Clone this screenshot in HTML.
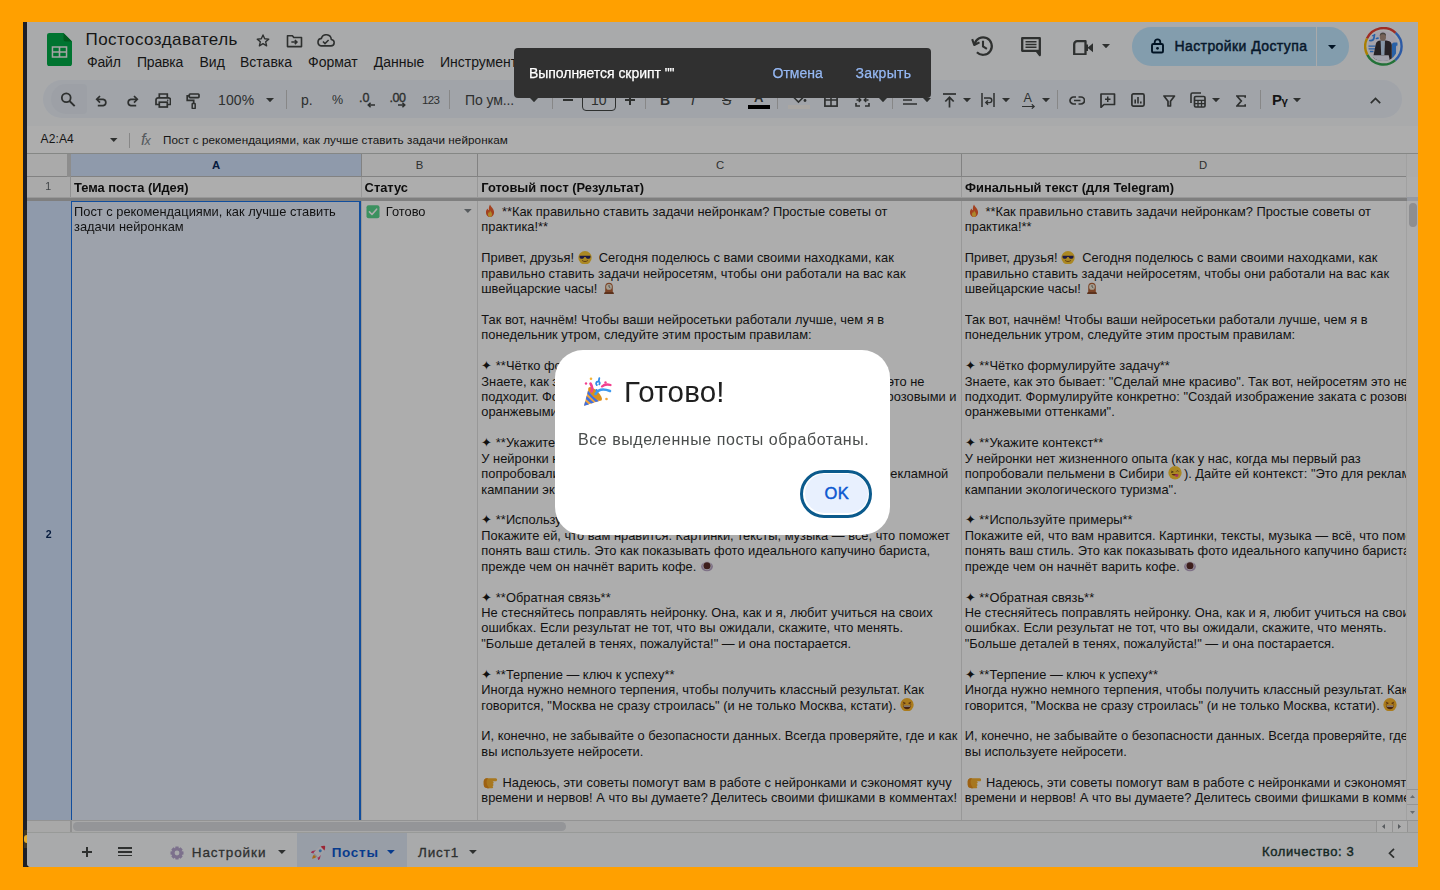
<!DOCTYPE html>
<html lang="ru"><head><meta charset="utf-8"><title>Постосоздаватель</title>
<style>
html,body{margin:0;padding:0}
body{width:1440px;height:890px;overflow:hidden;background:#ffa000;font-family:"Liberation Sans",Arial,sans-serif;position:relative}
#win{position:absolute;left:23px;top:22px;width:1395px;height:845px;overflow:hidden;background:#1d1f27}
#g{position:absolute;left:-23px;top:-22px;width:1440px;height:890px;filter:blur(0.4px)}
.a{position:absolute;display:block}
.t{position:absolute;white-space:nowrap}
.cell{position:absolute;white-space:nowrap;font-size:12.87px;line-height:15.420px;color:#1a1a1a;overflow:hidden}
.e{display:inline-block;vertical-align:-2.5px;width:13px;height:13px}
</style></head><body>
<div id="win"><div id="g">
<div class="a" style="left:26.8px;top:22px;width:1391.2px;height:845px;background:#f9fbfd;border-bottom-left-radius:4px"></div>
<div class="a" style="left:26px;top:126px;width:1392px;height:27px;background:#ffffff;"></div>
<div class="a" style="left:43px;top:80px;width:1359px;height:38px;background:#edf2fa;border-radius:19px"></div>
<div class="a" style="left:51px;top:84px;width:36px;height:30px;background:#e7ecf5;border-radius:15px 4px 4px 15px"></div>
<svg class="a" style="left:47px;top:32.6px;" width="25" height="33.3" viewBox="0 0 25 33.3"><path d="M2.500 0H16.500l8.500 8.500v22.300a2.500 2.500 0 0 1-2.500 2.500h-20A2.500 2.500 0 0 1 0 30.800v-28.300A2.500 2.500 0 0 1 2.500 0z" fill="#00ac47"/><path d="M16.500 0l8.500 8.500h-6A2.500 2.500 0 0 1 16.500 6z" fill="#00832d"/><path d="M4.700 13.200h15.600v11.600H4.700zM6.200 14.700v3.500h5.500v-3.500zm7.100 0v3.500h5.500v-3.500zM6.200 19.800v3.500h5.500v-3.500zm7.100 0v3.500h5.500v-3.500z" fill="#f4f4f4" fill-rule="evenodd"/></svg>
<div class="t" style="left:85.50px;top:28.11px;font-size:17px;line-height:24px;color:#1f1f1f;letter-spacing:0.45px;">Постосоздаватель</div>
<svg class="a" style="left:255px;top:33px;" width="16" height="15" viewBox="0 0 24 24"><path d="M12 3.200l2.700 6 6.500.600-4.900 4.300 1.500 6.400L12 17.100l-5.800 3.400 1.500-6.400-4.900-4.300 6.500-.600z" fill="none" stroke="#444746" stroke-width="2.200" stroke-linejoin="round"/></svg>
<svg class="a" style="left:285.5px;top:33.5px;" width="17" height="14" viewBox="0 0 24 20"><path d="M2 2.500h7l2 2.500h11v13H2z" fill="none" stroke="#444746" stroke-width="2.300" stroke-linejoin="round"/><path d="M7.500 11.500h7M12.500 8.500l3 3-3 3" fill="none" stroke="#444746" stroke-width="2.200"/></svg>
<svg class="a" style="left:316px;top:34px;" width="19" height="13" viewBox="0 0 26 18"><path d="M7 16.500h13.500a4.500 4.500 0 0 0 .500-8.970A7 7 0 0 0 7.300 6.100 5.250 5.250 0 0 0 7 16.500z" fill="none" stroke="#444746" stroke-width="2.200" stroke-linejoin="round"/><path d="M9.500 10.500l2.800 2.800 5-5" fill="none" stroke="#444746" stroke-width="2.100"/></svg>
<div class="t" style="left:87.00px;top:52.15px;font-size:14px;line-height:20px;color:#1f1f1f;letter-spacing:-0.2px;">Файл</div>
<div class="t" style="left:137.00px;top:52.15px;font-size:14px;line-height:20px;color:#1f1f1f;letter-spacing:-0.2px;">Правка</div>
<div class="t" style="left:199.50px;top:52.15px;font-size:14px;line-height:20px;color:#1f1f1f;">Вид</div>
<div class="t" style="left:240.00px;top:52.15px;font-size:14px;line-height:20px;color:#1f1f1f;">Вставка</div>
<div class="t" style="left:308.00px;top:52.15px;font-size:14px;line-height:20px;color:#1f1f1f;">Формат</div>
<div class="t" style="left:373.75px;top:52.15px;font-size:14px;line-height:20px;color:#1f1f1f;">Данные</div>
<div class="t" style="left:440.00px;top:52.15px;font-size:14px;line-height:20px;color:#1f1f1f;">Инструменты</div>
<svg class="a" style="left:971px;top:34px;" width="24" height="24" viewBox="0 0 24 24"><path d="M3.600 10.200A8.700 8.700 0 1 1 5.900 18.200" fill="none" stroke="#444746" stroke-width="2.200"/><path d="M1.200 5.200l2 5.800 5.300-2.600" fill="none" stroke="#444746" stroke-width="2.100" stroke-linejoin="round"/><path d="M12 6.800v5.600l3.900 2.400" fill="none" stroke="#444746" stroke-width="2.100"/></svg>
<svg class="a" style="left:1020.5px;top:37px;" width="20" height="19.5" viewBox="0 0 20 19.500"><path d="M1.200 1.200h17.600v12.600h-3.300l3.300 4.200v-4.200H1.200z" fill="none" stroke="#444746" stroke-width="2.300" stroke-linejoin="round"/><path d="M15.500 13.800h3.300v4.600z" fill="#444746"/><path d="M4.500 4.700h11M4.500 7.500h11M4.500 10.300h11" stroke="#444746" stroke-width="1.600"/></svg>
<svg class="a" style="left:1073px;top:39.5px;" width="20.5" height="15.5" viewBox="0 0 20.500 15.500"><path d="M1.200 4.200a3 3 0 0 1 3-3h8.300v13.100H1.200z" fill="none" stroke="#444746" stroke-width="2.300" stroke-linejoin="round"/><path d="M14.500 7.750l5.500-4.500v9z" fill="#444746"/><path d="M13 4.500h2v6.500h-2z" fill="#444746"/></svg>
<svg class="a" style="left:1102.3px;top:43.85px;" width="8" height="4.3" viewBox="0 0 8 4.3"><path d="M0 0H8L4.0 4.3Z" fill="#444746"/></svg>
<div class="a" style="left:1132px;top:27px;width:183.5px;height:38.5px;background:#c2e7ff;border-radius:19.250px 0 0 19.250px"></div>
<div class="a" style="left:1316.5px;top:27px;width:32px;height:38.5px;background:#c2e7ff;border-radius:0 19.250px 19.250px 0"></div>
<svg class="a" style="left:1151px;top:38.3px;" width="13" height="15.5" viewBox="0 0 13 15.500"><rect x="1" y="6" width="11" height="8.500" rx="1.300" fill="none" stroke="#001d35" stroke-width="1.900"/><path d="M3.700 6V4.200a2.800 2.800 0 0 1 5.600 0V6" fill="none" stroke="#001d35" stroke-width="1.800"/><circle cx="6.500" cy="10.300" r="1.400" fill="#001d35"/></svg>
<div class="t" style="left:1174.40px;top:36.40px;font-size:14px;line-height:20px;color:#0a2540;letter-spacing:0.42px;-webkit-text-stroke:0.45px #0a2540;">Настройки Доступа</div>
<svg class="a" style="left:1328.0px;top:44.550000000000004px;" width="8" height="4.3" viewBox="0 0 8 4.3"><path d="M0 0H8L4.0 4.3Z" fill="#001d35"/></svg>
<div class="a" style="left:1368.400px;top:31.100px;width:29.800px;height:29.800px;border-radius:50%;overflow:hidden;background:#f4edfb"><svg class="a" style="left:-4.500px;top:-4.400px" width="39" height="39" viewBox="0 0 39 39"><path d="M5.500 13.500c2.500.500 4-.500 4.500-2.500l.500-3.500M8.500 8.500l2-.300M12.500 11.500l1.500-.300" stroke="#3f8ff5" stroke-width="1.700" fill="none" stroke-linecap="round"/><path d="M4.500 19.200h7M4.500 21.800h7M6 24.500h3.500" stroke="#3f8ff5" stroke-width="1.300" fill="none"/><path d="M33.500 15.500h-3.500c-1.500 0-2 1-2 2.500v15h4v-13c0-1 .500-1.500 1.500-1.500z" fill="#3f8ff5"/><path d="M11.800 17c.500-2.500 2-3.300 4.500-3.600h6c3 .300 5.300 1.300 5.500 4.600v15.500H8.500z" fill="#3a3237"/><path d="M16.600 13.500h4.400l-.600 14.500h-3.200z" fill="#c8def8"/><ellipse cx="18.900" cy="9.900" rx="3.100" ry="3.900" fill="#ab8f80"/><path d="M15.700 9.200c0-2.600 1.400-3.600 3.200-3.600s3.300 1 3.200 3.600c-1-1.600-2-1.900-3.200-1.900s-2.200.300-3.200 1.900z" fill="#6e665f"/><path d="M7.500 28.300h17.200l1.300 6H6z" fill="#eeeefc"/></svg></div>
<svg class="a" style="left:1363.9px;top:26.7px;" width="39" height="39" viewBox="0 0 39 39"><path d="M31.63 5.82A18.2 18.2 0 0 0 2.96 11.49" fill="none" stroke="#ea4335" stroke-width="2.400"/><path d="M2.96 11.49A18.2 18.2 0 0 0 3.33 27.84" fill="none" stroke="#fbbc04" stroke-width="2.400"/><path d="M3.33 27.84A18.2 18.2 0 0 0 31.34 33.04" fill="none" stroke="#34a853" stroke-width="2.400"/><path d="M31.34 33.04A18.2 18.2 0 0 0 31.63 5.82" fill="none" stroke="#4285f4" stroke-width="2.400"/></svg>
<svg class="a" style="left:60px;top:92px;" width="16" height="15" viewBox="0 0 16 15"><circle cx="6.250" cy="5.750" r="4.400" fill="none" stroke="#444746" stroke-width="1.800"/><path d="M9.500 9l5.200 5.200" stroke="#444746" stroke-width="1.900"/></svg>
<svg class="a" style="left:95px;top:95px;" width="13" height="11.5" viewBox="0 0 13 11.500"><path d="M2 4.300h6.200a3.200 3.200 0 0 1 0 6.300H2.800" fill="none" stroke="#444746" stroke-width="1.700"/><path d="M5 1L1.700 4.300 5 7.600" fill="none" stroke="#444746" stroke-width="1.700"/></svg>
<svg class="a" style="left:125.5px;top:95px;" width="13" height="11.5" viewBox="0 0 13 11.500"><path d="M11 4.300H4.800a3.200 3.200 0 0 0 0 6.300h5.400" fill="none" stroke="#444746" stroke-width="1.700"/><path d="M8 1l3.300 3.300L8 7.600" fill="none" stroke="#444746" stroke-width="1.700"/></svg>
<svg class="a" style="left:154.5px;top:92.5px;" width="16.5" height="15" viewBox="0 0 16.500 15"><path d="M4.300 4.700V1h8v3.700" fill="none" stroke="#444746" stroke-width="1.700"/><path d="M4 11.500H1V7a2.200 2.200 0 0 1 2.200-2.200h10.100A2.200 2.200 0 0 1 15.500 7v4.500h-3" fill="none" stroke="#444746" stroke-width="1.700"/><rect x="4.300" y="9.200" width="8" height="4.800" fill="none" stroke="#444746" stroke-width="1.700"/><circle cx="12.700" cy="7.300" r=".8" fill="#444746"/></svg>
<svg class="a" style="left:185.5px;top:92.5px;" width="15" height="16.5" viewBox="0 0 15 16.500"><rect x="3.300" y="1" width="9.700" height="3.600" rx=".8" fill="none" stroke="#444746" stroke-width="1.700"/><path d="M3.300 2.800H1.200v4.500h6.500v3.200" fill="none" stroke="#444746" stroke-width="1.700"/><rect x="6.200" y="10.500" width="3" height="5" rx=".6" fill="none" stroke="#444746" stroke-width="1.500"/></svg>
<div class="t" style="left:218.00px;top:90.15px;font-size:14px;line-height:20px;color:#444746;letter-spacing:0.1px;">100%</div>
<svg class="a" style="left:266.0px;top:97.9px;" width="8" height="4.2" viewBox="0 0 8 4.2"><path d="M0 0H8L4.0 4.2Z" fill="#444746"/></svg>
<div class="a" style="left:286.25px;top:90px;width:1px;height:19px;background:#c7c7c7;"></div>
<div class="t" style="left:301.00px;top:90.15px;font-size:14px;line-height:20px;color:#444746;">р.</div>
<div class="t" style="left:332.00px;top:91.27px;font-size:12.5px;line-height:18px;color:#444746;letter-spacing:-0.5px;">%</div>
<div class="t" style="left:359.00px;top:89.27px;font-size:12.5px;line-height:18px;color:#444746;-webkit-text-stroke:0.35px #444746;">.0</div>
<svg class="a" style="left:367.3px;top:102.3px;" width="8" height="6" viewBox="0 0 8.500 6"><path d="M8.500 3H1.500M3.800 .600L1.300 3l2.500 2.400" fill="none" stroke="#444746" stroke-width="1.600"/></svg>
<div class="t" style="left:389.50px;top:89.27px;font-size:12.5px;line-height:18px;color:#444746;letter-spacing:-0.4px;-webkit-text-stroke:0.35px #444746;">.00</div>
<svg class="a" style="left:398px;top:102.3px;" width="8" height="6" viewBox="0 0 8.500 6"><path d="M0 3h7M4.700 .600L7.200 3 4.700 5.400" fill="none" stroke="#444746" stroke-width="1.600"/></svg>
<div class="t" style="left:422.00px;top:92.22px;font-size:11.5px;line-height:16px;color:#444746;letter-spacing:-0.7px;">123</div>
<div class="a" style="left:449.0px;top:90px;width:1px;height:19px;background:#c7c7c7;"></div>
<div class="t" style="left:465.00px;top:90.15px;font-size:14px;line-height:20px;color:#444746;letter-spacing:-0.1px;">По ум...</div>
<svg class="a" style="left:529.75px;top:97.9px;" width="8" height="4.2" viewBox="0 0 8 4.2"><path d="M0 0H8L4.0 4.2Z" fill="#444746"/></svg>
<div class="a" style="left:552.0px;top:90px;width:1px;height:19px;background:#c7c7c7;"></div>
<div class="a" style="left:563px;top:98.7px;width:9.5px;height:2px;background:#444746;"></div>
<div class="a" style="left:582px;top:88px;width:32px;height:21px;border:1px solid #444746;border-radius:4px"></div>
<div class="t" style="left:498.75px;width:200px;text-align:center;top:90.15px;font-size:14px;line-height:20px;color:#444746;">10</div>
<div class="a" style="left:625px;top:98.7px;width:10px;height:2px;background:#444746;"></div>
<div class="a" style="left:629px;top:94.7px;width:2px;height:10px;background:#444746;"></div>
<div class="a" style="left:645.0px;top:90px;width:1px;height:19px;background:#c7c7c7;"></div>
<div class="t" style="left:660.00px;top:90.15px;font-size:14px;line-height:20px;color:#444746;font-weight:bold;">B</div>
<div class="t" style="left:691.00px;top:90.15px;font-size:14px;line-height:20px;color:#444746;font-style:italic;font-family:"Liberation Serif",serif;font-weight:bold;">I</div>
<div class="t" style="left:722.00px;top:90.15px;font-size:14px;line-height:20px;color:#444746;text-decoration:line-through;">S</div>
<div class="t" style="left:754.00px;top:89.00px;font-size:13px;line-height:18px;color:#444746;font-weight:bold;">A</div>
<div class="a" style="left:747.5px;top:105px;width:22.5px;height:3.8px;background:#000;"></div>
<div class="a" style="left:777.0px;top:90px;width:1px;height:19px;background:#c7c7c7;"></div>
<svg class="a" style="left:790px;top:90px;" width="17" height="14" viewBox="0 0 17 14"><path d="M8 1.500l5.500 5.500-5 5-5.500-5.500z" fill="none" stroke="#444746" stroke-width="1.600"/><circle cx="15" cy="10.500" r="1.400" fill="#444746"/></svg>
<div class="a" style="left:787.5px;top:105px;width:22px;height:3.8px;background:#fbf7f0;"></div>
<svg class="a" style="left:824px;top:92.5px;" width="14" height="14" viewBox="0 0 14 14"><rect x=".9" y=".9" width="12.200" height="12.200" fill="none" stroke="#444746" stroke-width="1.700"/><path d="M7 1v12M1 7h12" stroke="#444746" stroke-width="1.500"/></svg>
<svg class="a" style="left:855px;top:92.5px;" width="15" height="14" viewBox="0 0 15 14"><path d="M1 4V1h4M10 1h4v3M14 10v3h-4M5 13H1v-3" fill="none" stroke="#444746" stroke-width="1.600"/><path d="M1.500 7h4M3.800 5l2 2-2 2M13.500 7h-4M11.200 5l-2 2 2 2" fill="none" stroke="#444746" stroke-width="1.400"/></svg>
<svg class="a" style="left:879.25px;top:97.9px;" width="8" height="4.2" viewBox="0 0 8 4.2"><path d="M0 0H8L4.0 4.2Z" fill="#444746"/></svg>
<div class="a" style="left:892.0px;top:90px;width:1px;height:19px;background:#c7c7c7;"></div>
<svg class="a" style="left:902.5px;top:95px;" width="14" height="12" viewBox="0 0 14 12"><path d="M0 1h14M0 5h9M0 9h14" stroke="#444746" stroke-width="1.600"/></svg>
<svg class="a" style="left:923.0px;top:97.9px;" width="8" height="4.2" viewBox="0 0 8 4.2"><path d="M0 0H8L4.0 4.2Z" fill="#444746"/></svg>
<svg class="a" style="left:943px;top:92.5px;" width="13" height="15" viewBox="0 0 13 15"><path d="M0 1h13" stroke="#444746" stroke-width="1.700"/><path d="M6.500 14.500V4.500M2.300 8.500l4.200-4.200 4.200 4.200" fill="none" stroke="#444746" stroke-width="1.700"/></svg>
<svg class="a" style="left:962.75px;top:97.9px;" width="8" height="4.2" viewBox="0 0 8 4.2"><path d="M0 0H8L4.0 4.2Z" fill="#444746"/></svg>
<svg class="a" style="left:981px;top:93px;" width="14" height="14" viewBox="0 0 14 14"><path d="M1 0v14M13 0v14" stroke="#444746" stroke-width="1.500"/><path d="M3 5h5.500a2.300 2.300 0 0 1 0 4.600H5M7 7.400L4.800 9.600 7 11.800" fill="none" stroke="#444746" stroke-width="1.400"/></svg>
<svg class="a" style="left:1002.25px;top:97.9px;" width="8" height="4.2" viewBox="0 0 8 4.2"><path d="M0 0H8L4.0 4.2Z" fill="#444746"/></svg>
<div class="t" style="left:1023.50px;top:89.17px;font-size:12.5px;line-height:18px;color:#444746;">A</div>
<svg class="a" style="left:1022px;top:103.5px;" width="13.5" height="5" viewBox="0 0 13.500 5"><path d="M0 2.500h12M9.800 .300L12.200 2.500 9.800 4.700" fill="none" stroke="#444746" stroke-width="1.200"/></svg>
<svg class="a" style="left:1041.75px;top:97.9px;" width="8" height="4.2" viewBox="0 0 8 4.2"><path d="M0 0H8L4.0 4.2Z" fill="#444746"/></svg>
<div class="a" style="left:1057.0px;top:90px;width:1px;height:19px;background:#c7c7c7;"></div>
<svg class="a" style="left:1068.5px;top:95.5px;" width="16.5" height="9" viewBox="0 0 16.500 9"><path d="M7 1H4.500a3.500 3.500 0 0 0 0 7H7M9.500 1H12a3.500 3.500 0 0 1 0 7H9.500M5 4.500h6.500" fill="none" stroke="#444746" stroke-width="1.700"/></svg>
<svg class="a" style="left:1100px;top:92.5px;" width="15.5" height="15" viewBox="0 0 15.500 15"><path d="M1 1h13.500v10.500H4L1 14.300z" fill="none" stroke="#444746" stroke-width="1.700" stroke-linejoin="round"/><path d="M7.750 3.500v5.500M5 6.250h5.500" stroke="#444746" stroke-width="1.500"/></svg>
<svg class="a" style="left:1131px;top:93px;" width="14" height="14" viewBox="0 0 14 14"><rect x=".9" y=".9" width="12.200" height="12.200" rx="1.500" fill="none" stroke="#444746" stroke-width="1.700"/><path d="M4.200 10.500V6.500M7 10.500V4M9.800 10.500V8.500" stroke="#444746" stroke-width="1.600"/></svg>
<svg class="a" style="left:1163px;top:94.5px;" width="12.5" height="12" viewBox="0 0 12.500 12"><path d="M1 1h10.500L7.500 6.200v4.800h-2.500V6.200z" fill="none" stroke="#444746" stroke-width="1.700" stroke-linejoin="round"/></svg>
<svg class="a" style="left:1189.5px;top:92px;" width="16" height="16" viewBox="0 0 16 16"><path d="M1 11V2.500A1.500 1.500 0 0 1 2.500 1H11" fill="none" stroke="#444746" stroke-width="1.600"/><rect x="4.500" y="4.500" width="10.500" height="10.500" rx="1.200" fill="none" stroke="#444746" stroke-width="1.700"/><path d="M4.500 8.300h10.500M4.500 11.600h10.500M8 8.300v6.700M11.500 8.300v6.700" stroke="#444746" stroke-width="1.300"/></svg>
<svg class="a" style="left:1211.5px;top:97.9px;" width="8" height="4.2" viewBox="0 0 8 4.2"><path d="M0 0H8L4.0 4.2Z" fill="#444746"/></svg>
<svg class="a" style="left:1235.5px;top:94.5px;" width="10" height="12" viewBox="0 0 10 12"><path d="M9.200 2.800V1H1l4.300 5L1 11h8.200V9.200" fill="none" stroke="#444746" stroke-width="1.700" stroke-linejoin="miter"/></svg>
<div class="a" style="left:1260.0px;top:90px;width:1px;height:19px;background:#c7c7c7;"></div>
<div class="t" style="left:1272.00px;top:89.30px;font-size:15px;line-height:21px;color:#1f1f1f;font-weight:bold;">Р</div>
<div class="t" style="left:1281.50px;top:92.52px;font-size:11.5px;line-height:16px;color:#1f1f1f;font-weight:bold;">ү</div>
<svg class="a" style="left:1293.0px;top:97.9px;" width="8" height="4.2" viewBox="0 0 8 4.2"><path d="M0 0H8L4.0 4.2Z" fill="#444746"/></svg>
<svg class="a" style="left:1370px;top:96.5px;" width="11" height="7" viewBox="0 0 11 7"><path d="M.800 6.200L5.500 1.500l4.700 4.700" fill="none" stroke="#444746" stroke-width="1.700"/></svg>
<div class="t" style="left:40.50px;top:131.09px;font-size:12px;line-height:17px;color:#1f1f1f;letter-spacing:0.15px;">A2:A4</div>
<svg class="a" style="left:110.0px;top:138.0px;" width="7.5" height="4" viewBox="0 0 7.5 4"><path d="M0 0H7.5L3.75 4Z" fill="#444746"/></svg>
<div class="a" style="left:129px;top:132.5px;width:1px;height:15.5px;background:#c7c7c7;"></div>
<div class="t" style="left:141.00px;top:131.00px;font-size:13px;line-height:18px;color:#80868b;font-style:italic;font-family:"Liberation Serif",serif;"><span style="font-size:16px">f</span><span style="font-size:12.500px;margin-left:-1px">x</span></div>
<div class="t" style="left:163.00px;top:132.25px;font-size:11.7px;line-height:16px;color:#1f1f1f;letter-spacing:0.07px;">Пост с рекомендациями, как лучше ставить задачи нейронкам</div>
<div class="a" style="left:26px;top:153px;width:1392px;height:680px;background:#ffffff;"></div>
<div class="a" style="left:26px;top:153px;width:1392px;height:1px;background:#c4c7c5;"></div>
<div class="a" style="left:26px;top:154px;width:41px;height:23px;background:#fbfbfb;"></div>
<div class="a" style="left:71px;top:154px;width:1336px;height:23px;background:#fbfbfb;"></div>
<div class="a" style="left:71px;top:154px;width:290px;height:23px;background:#d3e3fd;"></div>
<div class="a" style="left:26px;top:177px;width:44.5px;height:20px;background:#fbfbfb;"></div>
<div class="a" style="left:70.3px;top:177px;width:1px;height:20px;background:#d5d5d5;"></div>
<div class="a" style="left:26px;top:176px;width:1381px;height:1px;background:#c0c0c0;"></div>
<div class="a" style="left:26px;top:201px;width:45px;height:619px;background:#d3e3fd;"></div>
<div class="a" style="left:66.5px;top:154px;width:4px;height:22.5px;background:#d0d0d0;"></div>
<div class="a" style="left:71px;top:201px;width:290px;height:619px;background:#e7effd;"></div>
<div class="a" style="left:361px;top:154px;width:1px;height:666px;background:#e1e1e1;"></div>
<div class="a" style="left:361px;top:154px;width:1px;height:23px;background:#c0c0c0;"></div>
<div class="a" style="left:477px;top:154px;width:1px;height:666px;background:#e1e1e1;"></div>
<div class="a" style="left:477px;top:154px;width:1px;height:23px;background:#c0c0c0;"></div>
<div class="a" style="left:961px;top:154px;width:1px;height:666px;background:#e1e1e1;"></div>
<div class="a" style="left:961px;top:154px;width:1px;height:23px;background:#c0c0c0;"></div>
<div class="a" style="left:1406px;top:154px;width:1.3px;height:666px;background:#eeeeee;"></div>
<div class="a" style="left:26px;top:197px;width:1381px;height:4px;background:#bcbcbc;"></div>
<div class="a" style="left:26px;top:196.5px;width:1381px;height:1px;background:#e1e1e1;"></div>
<div class="t" style="left:116.00px;width:200px;text-align:center;top:157.38px;font-size:11.3px;line-height:16px;color:#0a2a5c;font-weight:bold;">A</div>
<div class="t" style="left:319.50px;width:200px;text-align:center;top:157.38px;font-size:11.3px;line-height:16px;color:#444746;">B</div>
<div class="t" style="left:620.00px;width:200px;text-align:center;top:157.38px;font-size:11.3px;line-height:16px;color:#444746;">C</div>
<div class="t" style="left:1103.00px;width:200px;text-align:center;top:157.38px;font-size:11.3px;line-height:16px;color:#444746;">D</div>
<div class="t" style="left:-51.70px;width:200px;text-align:center;top:179.03px;font-size:10.6px;line-height:15px;color:#5f6368;">1</div>
<div class="t" style="left:-51.40px;width:200px;text-align:center;top:526.83px;font-size:10.6px;line-height:15px;color:#0a2a5c;font-weight:bold;">2</div>
<div class="t" style="left:74.00px;top:178.74px;font-size:12.87px;line-height:18px;color:#141414;font-weight:bold;">Тема поста (Идея)</div>
<div class="t" style="left:364.60px;top:178.74px;font-size:12.87px;line-height:18px;color:#141414;font-weight:bold;">Статус</div>
<div class="t" style="left:481.25px;top:178.74px;font-size:12.87px;line-height:18px;color:#141414;font-weight:bold;">Готовый пост (Результат)</div>
<div class="t" style="left:965.00px;top:178.74px;font-size:12.87px;line-height:18px;color:#141414;font-weight:bold;">Финальный текст (для Telegram)</div>
<div class="a" style="left:70.800px;top:200.600px;width:290.700px;height:625px;border:1.400px solid #1a73e8;border-right-width:2px;box-sizing:border-box"></div>
<div class="cell" style="left:74px;top:204.0px;width:286px;height:616.0px">Пост с рекомендациями, как лучше ставить<br>задачи нейронкам</div>
<div class="cell" style="left:366px;top:204.0px;width:100px;height:616.0px"><span style="position:relative;top:0.800px"><svg class="e" style="width:14px;height:13.5px;vertical-align:-1.8px;margin-left:0px;margin-right:0px" viewBox="0 0 16 16"><rect x=".3" y=".3" width="15.400" height="15.400" rx="2.500" fill="#58d68d"/><path d="M3.800 8.200l3 3L12.300 5" stroke="#fff" stroke-width="1.900" fill="none" stroke-linecap="round" stroke-linejoin="round"/></svg></span><span style="margin-left:5.800px">Готово</span></div>
<svg class="a" style="left:463.95px;top:209.0px;" width="7.7" height="4" viewBox="0 0 7.7 4"><path d="M0 0H7.7L3.85 4Z" fill="#80868b"/></svg>
<div class="cell" style="left:481.3px;top:204.0px;width:478px;height:616.0px"><span style="margin-left:2px"></span><svg class="e" style="width:14px;height:13.5px;vertical-align:-1.8px;margin-left:0px;margin-right:0px" viewBox="0 0 16 16"><path d="M8 .5c.6 2.6 4.8 4.7 4.8 9.2 0 3.2-2.2 5.8-4.8 5.8S3.2 12.900 3.200 9.700c0-2.100 1-3.500 2-4.500.2 1.200.8 1.900 1.500 2.200C6.300 4.800 7 2.200 8 .5z" fill="#f0602f"/><path d="M8 7.500c.4 1.600 2.400 2.600 2.400 4.800 0 1.700-1.100 3-2.400 3s-2.400-1.300-2.400-3c0-1.600.9-2.400 1.500-3.100.1.700.4 1 .7 1.200-.200-1.200.000-2.200.200-2.900z" fill="#ffc83d"/></svg><span style="margin-left:-2.500px"></span>&nbsp; **Как правильно ставить задачи нейронкам? Простые советы от<br>практика!**<br><br>Привет, друзья! <svg class="e" style="width:14px;height:13.5px;vertical-align:-1.8px;margin-left:0px;margin-right:0px" viewBox="0 0 16 16"><circle cx="8" cy="8" r="7.900" fill="#fcc934"/><path d="M1.500 5.500h13v1.200c0 1.500-1.100 2.600-2.600 2.600S9.300 8.400 8.800 7H7.200C6.700 8.400 5.600 9.300 4.100 9.300S1.500 8.200 1.500 6.700z" fill="#2b2663"/><path d="M5 11.500c1.800 1.400 4.200 1.400 6 0" stroke="#7a4a1a" stroke-width="1" fill="none" stroke-linecap="round"/></svg>&nbsp; Сегодня поделюсь с вами своими находками, как<br>правильно ставить задачи нейросетям, чтобы они работали на вас как<br>швейцарские часы! <span style="margin-left:1px"></span><svg class="e" style="width:14px;height:13.5px;vertical-align:-1.8px;margin-left:0px;margin-right:0px" viewBox="0 0 16 16"><path d="M2 15.500h12l-1-2.500H3z" fill="#8a4b2a"/><path d="M3.500 13V6.500a4.500 4.500 0 0 1 9 0V13z" fill="#b5653a"/><circle cx="8" cy="7" r="3.400" fill="#f3ead8"/><path d="M8 4.800V7l1.600 1" stroke="#444" stroke-width=".8" fill="none"/></svg><br><br>Так вот, начнём! Чтобы ваши нейросетьки работали лучше, чем я в<br>понедельник утром, следуйте этим простым правилам:<br><br>✦ **Чётко формулируйте задачу**<br>Знаете, как это бывает: "Сделай мне красиво". Так вот, нейросетям это не<br>подходит. Формулируйте конкретно: "Создай изображение заката с розовыми и<br>оранжевыми оттенками".<br><br>✦ **Укажите контекст**<br>У нейронки нет жизненного опыта (как у нас, когда мы первый раз<br>попробовали пельмени в Сибири <svg class="e" style="width:14px;height:13.5px;vertical-align:-1.8px;margin-left:0px;margin-right:0px" viewBox="0 0 16 16"><circle cx="8" cy="8" r="7.900" fill="#fcc934"/><path d="M4 9.500c1 2.500 7 2.500 8 0z" fill="#7a3b1a"/><path d="M7.500 10.500c0 3 4.500 3.500 4.500 .500 0-.8-.5-1.500-1.200-1.500z" fill="#f0508a"/><path d="M3.800 6.200l2.200.8-2.200.8M12.200 6.200c-.6-.900-1.900-.900-2.500 0" stroke="#5a3a1a" stroke-width=".9" fill="none" stroke-linecap="round"/></svg><span style="margin-left:2px">)</span>. Дайте ей контекст: "Это для рекламной<br>кампании экологического туризма".<br><br>✦ **Используйте примеры**<br>Покажите ей, что вам нравится. Картинки, тексты, музыка — всё, что поможет<br>понять ваш стиль. Это как показывать фото идеального капучино бариста,<br>прежде чем он начнёт варить кофе. <svg class="e" style="width:14px;height:13.5px;vertical-align:-1.8px;margin-left:0px;margin-right:0px" viewBox="0 0 16 16"><ellipse cx="8" cy="9" rx="7" ry="5.500" fill="#b7a4c4"/><circle cx="8" cy="8" r="5.200" fill="#efe7f2"/><circle cx="8" cy="8" r="4.200" fill="#5a2d2a"/></svg><br><br>✦ **Обратная связь**<br>Не стесняйтесь поправлять нейронку. Она, как и я, любит учиться на своих<br>ошибках. Если результат не тот, что вы ожидали, скажите, что менять.<br>"Больше деталей в тенях, пожалуйста!" — и она постарается.<br><br>✦ **Терпение — ключ к успеху**<br>Иногда нужно немного терпения, чтобы получить классный результат. Как<br>говорится, "Москва не сразу строилась" (и не только Москва, кстати). <svg class="e" style="width:14px;height:13.5px;vertical-align:-1.8px;margin-left:0px;margin-right:0px" viewBox="0 0 16 16"><circle cx="8" cy="8" r="7.900" fill="#fcb72b"/><path d="M3.500 8.800h9c0 2.700-2 4.400-4.500 4.400s-4.500-1.700-4.500-4.400z" fill="#6b3316"/><path d="M4.200 9h7.600v1.200H4.200z" fill="#fff"/><path d="M3.500 5l2.500 1.200-2.500 1M12.500 5L10 6.200l2.500 1" stroke="#6b3316" stroke-width=".9" fill="none" stroke-linecap="round"/></svg><br><br>И, конечно, не забывайте о безопасности данных. Всегда проверяйте, где и как<br>вы используете нейросети.<br><br><span style="margin-left:2px"></span><svg class="e" style="width:14.5px;height:13.5px;vertical-align:-3px;margin-left:0px;margin-right:0px" viewBox="0 0 16 14"><path d="M.800 5.500C.800 3.500 2.200 2 4.200 2H14c2.100 0 2.100 3.400 0 3.400H10.500c1.700.200 1.700 2.700 0 2.800 1.500.200 1.400 2.500-.100 2.600 1.200.200 1.100 2.200-.300 2.200H4.800c-2.400 0-4-1.600-4-4z" fill="#f7b02e"/><path d="M.800 5.500C.800 3.500 2.200 2 4.200 2h1.500c-1.200 1-1.700 2.400-1.700 4.200s.800 4.600 3 6.800H4.800c-2.400 0-4-1.600-4-4z" fill="#e8901c"/></svg><span style="margin-left:-2.500px"></span>&nbsp; Надеюсь, эти советы помогут вам в работе с нейронками и сэкономят кучу<br>времени и нервов! А что вы думаете? Делитесь своими фишками в комментах!</div>
<div class="cell" style="left:964.8px;top:204.0px;width:441.2px;height:616.0px"><span style="margin-left:2px"></span><svg class="e" style="width:14px;height:13.5px;vertical-align:-1.8px;margin-left:0px;margin-right:0px" viewBox="0 0 16 16"><path d="M8 .5c.6 2.6 4.8 4.7 4.8 9.2 0 3.2-2.2 5.8-4.8 5.8S3.2 12.900 3.200 9.700c0-2.100 1-3.500 2-4.500.2 1.200.8 1.900 1.500 2.200C6.300 4.800 7 2.200 8 .5z" fill="#f0602f"/><path d="M8 7.500c.4 1.600 2.400 2.600 2.400 4.800 0 1.700-1.100 3-2.400 3s-2.400-1.300-2.400-3c0-1.600.9-2.400 1.500-3.100.1.700.4 1 .7 1.200-.200-1.200.000-2.200.200-2.900z" fill="#ffc83d"/></svg><span style="margin-left:-2.500px"></span>&nbsp; **Как правильно ставить задачи нейронкам? Простые советы от<br>практика!**<br><br>Привет, друзья! <svg class="e" style="width:14px;height:13.5px;vertical-align:-1.8px;margin-left:0px;margin-right:0px" viewBox="0 0 16 16"><circle cx="8" cy="8" r="7.900" fill="#fcc934"/><path d="M1.500 5.500h13v1.200c0 1.500-1.100 2.600-2.600 2.600S9.300 8.400 8.800 7H7.200C6.700 8.400 5.600 9.300 4.100 9.300S1.500 8.200 1.500 6.700z" fill="#2b2663"/><path d="M5 11.500c1.800 1.400 4.200 1.400 6 0" stroke="#7a4a1a" stroke-width="1" fill="none" stroke-linecap="round"/></svg>&nbsp; Сегодня поделюсь с вами своими находками, как<br>правильно ставить задачи нейросетям, чтобы они работали на вас как<br>швейцарские часы! <span style="margin-left:1px"></span><svg class="e" style="width:14px;height:13.5px;vertical-align:-1.8px;margin-left:0px;margin-right:0px" viewBox="0 0 16 16"><path d="M2 15.500h12l-1-2.500H3z" fill="#8a4b2a"/><path d="M3.500 13V6.500a4.500 4.500 0 0 1 9 0V13z" fill="#b5653a"/><circle cx="8" cy="7" r="3.400" fill="#f3ead8"/><path d="M8 4.800V7l1.600 1" stroke="#444" stroke-width=".8" fill="none"/></svg><br><br>Так вот, начнём! Чтобы ваши нейросетьки работали лучше, чем я в<br>понедельник утром, следуйте этим простым правилам:<br><br>✦ **Чётко формулируйте задачу**<br>Знаете, как это бывает: "Сделай мне красиво". Так вот, нейросетям это не<br>подходит. Формулируйте конкретно: "Создай изображение заката с розовыми и<br>оранжевыми оттенками".<br><br>✦ **Укажите контекст**<br>У нейронки нет жизненного опыта (как у нас, когда мы первый раз<br>попробовали пельмени в Сибири <svg class="e" style="width:14px;height:13.5px;vertical-align:-1.8px;margin-left:0px;margin-right:0px" viewBox="0 0 16 16"><circle cx="8" cy="8" r="7.900" fill="#fcc934"/><path d="M4 9.500c1 2.500 7 2.500 8 0z" fill="#7a3b1a"/><path d="M7.500 10.500c0 3 4.500 3.500 4.500 .500 0-.8-.5-1.500-1.200-1.500z" fill="#f0508a"/><path d="M3.800 6.200l2.200.8-2.200.8M12.200 6.200c-.6-.900-1.900-.900-2.500 0" stroke="#5a3a1a" stroke-width=".9" fill="none" stroke-linecap="round"/></svg><span style="margin-left:2px">)</span>. Дайте ей контекст: "Это для рекламной<br>кампании экологического туризма".<br><br>✦ **Используйте примеры**<br>Покажите ей, что вам нравится. Картинки, тексты, музыка — всё, что поможет<br>понять ваш стиль. Это как показывать фото идеального капучино бариста,<br>прежде чем он начнёт варить кофе. <svg class="e" style="width:14px;height:13.5px;vertical-align:-1.8px;margin-left:0px;margin-right:0px" viewBox="0 0 16 16"><ellipse cx="8" cy="9" rx="7" ry="5.500" fill="#b7a4c4"/><circle cx="8" cy="8" r="5.200" fill="#efe7f2"/><circle cx="8" cy="8" r="4.200" fill="#5a2d2a"/></svg><br><br>✦ **Обратная связь**<br>Не стесняйтесь поправлять нейронку. Она, как и я, любит учиться на своих<br>ошибках. Если результат не тот, что вы ожидали, скажите, что менять.<br>"Больше деталей в тенях, пожалуйста!" — и она постарается.<br><br>✦ **Терпение — ключ к успеху**<br>Иногда нужно немного терпения, чтобы получить классный результат. Как<br>говорится, "Москва не сразу строилась" (и не только Москва, кстати). <svg class="e" style="width:14px;height:13.5px;vertical-align:-1.8px;margin-left:0px;margin-right:0px" viewBox="0 0 16 16"><circle cx="8" cy="8" r="7.900" fill="#fcb72b"/><path d="M3.500 8.800h9c0 2.700-2 4.400-4.500 4.400s-4.500-1.700-4.500-4.400z" fill="#6b3316"/><path d="M4.200 9h7.600v1.200H4.200z" fill="#fff"/><path d="M3.500 5l2.500 1.200-2.500 1M12.500 5L10 6.200l2.500 1" stroke="#6b3316" stroke-width=".9" fill="none" stroke-linecap="round"/></svg><br><br>И, конечно, не забывайте о безопасности данных. Всегда проверяйте, где и как<br>вы используете нейросети.<br><br><span style="margin-left:2px"></span><svg class="e" style="width:14.5px;height:13.5px;vertical-align:-3px;margin-left:0px;margin-right:0px" viewBox="0 0 16 14"><path d="M.800 5.500C.800 3.500 2.200 2 4.200 2H14c2.100 0 2.100 3.400 0 3.400H10.500c1.700.200 1.700 2.700 0 2.800 1.500.200 1.400 2.500-.100 2.600 1.200.200 1.100 2.200-.300 2.200H4.800c-2.400 0-4-1.600-4-4z" fill="#f7b02e"/><path d="M.800 5.500C.800 3.500 2.200 2 4.200 2h1.500c-1.200 1-1.700 2.400-1.700 4.200s.800 4.600 3 6.800H4.800c-2.400 0-4-1.600-4-4z" fill="#e8901c"/></svg><span style="margin-left:-2.500px"></span>&nbsp; Надеюсь, эти советы помогут вам в работе с нейронками и сэкономят кучу<br>времени и нервов! А что вы думаете? Делитесь своими фишками в комментах!</div>
<div class="a" style="left:1407px;top:154px;width:11px;height:666px;background:#ffffff;"></div>
<div class="a" style="left:1407px;top:154px;width:11px;height:23px;background:#fdfdfd;"></div>
<div class="a" style="left:1407px;top:197px;width:11px;height:4px;background:#dfe3ee;"></div>
<div class="a" style="left:1408.5px;top:202.5px;width:8.5px;height:24px;background:#d0d1d6;border-radius:4.250px"></div>
<div class="a" style="left:1407px;top:789px;width:11px;height:31px;background:#ffffff;"></div>
<div class="a" style="left:1407px;top:789px;width:11px;height:1px;background:#dcdcdc;"></div>
<div class="a" style="left:1407px;top:804px;width:11px;height:1px;background:#dcdcdc;"></div>
<svg class="a" style="left:1410px;top:794.7px;" width="5" height="3" viewBox="0 0 5 3"><path d="M0 3h5L2.500 0z" fill="#9aa0a6"/></svg>
<svg class="a" style="left:1410.0px;top:810.5px;" width="5" height="3" viewBox="0 0 5 3"><path d="M0 0H5L2.5 3Z" fill="#9aa0a6"/></svg>
<div class="a" style="left:26px;top:820px;width:1392px;height:12.5px;background:#f8f8f8;"></div>
<div class="a" style="left:26px;top:820px;width:1392px;height:1px;background:#d9d9d9;"></div>
<div class="a" style="left:70.3px;top:821px;width:2px;height:11px;background:#d4d4d4;"></div>
<div class="a" style="left:73px;top:822px;width:493px;height:8.5px;background:#dadce0;border-radius:4.250px"></div>
<div class="a" style="left:1376px;top:820.5px;width:31px;height:12px;background:#ffffff;"></div>
<div class="a" style="left:1376px;top:820.5px;width:1px;height:12px;background:#d9d9d9;"></div>
<div class="a" style="left:1391.5px;top:820.5px;width:1px;height:12px;background:#d9d9d9;"></div>
<div class="a" style="left:1406.5px;top:820.5px;width:1px;height:12px;background:#d9d9d9;"></div>
<svg class="a" style="left:1382px;top:824px;" width="3" height="5" viewBox="0 0 3 5"><path d="M3 0v5L0 2.500z" fill="#80868b"/></svg>
<svg class="a" style="left:1397.5px;top:824px;" width="3" height="5" viewBox="0 0 3 5"><path d="M0 0v5l3-2.500z" fill="#80868b"/></svg>
<div class="a" style="left:26.8px;top:832.5px;width:1391.2px;height:34.5px;background:#f9fbfd;border-bottom-left-radius:4px"></div>
<div class="a" style="left:26px;top:832px;width:1392px;height:1px;background:#e1e3e1;"></div>
<div class="a" style="left:81.7px;top:851px;width:10.5px;height:1.7px;background:#444746;"></div>
<div class="a" style="left:86.1px;top:846.6px;width:1.7px;height:10.5px;background:#444746;"></div>
<div class="a" style="left:118px;top:847.3px;width:14px;height:1.6px;background:#444746;"></div>
<div class="a" style="left:118px;top:851.1px;width:14px;height:1.6px;background:#444746;"></div>
<div class="a" style="left:118px;top:854.9px;width:14px;height:1.6px;background:#444746;"></div>
<svg class="a" style="left:169.2px;top:844.5px;" width="16" height="16" viewBox="-8 -8 16 16"><path d="M6.52 -1.53L6.52 1.53L4.57 1.93L4.60 1.86L5.69 3.53L3.53 5.69L1.86 4.59L1.93 4.57L1.53 6.52L-1.53 6.52L-1.93 4.57L-1.86 4.60L-3.53 5.69L-5.69 3.53L-4.59 1.86L-4.57 1.93L-6.52 1.53L-6.52 -1.53L-4.57 -1.93L-4.60 -1.86L-5.69 -3.53L-3.53 -5.69L-1.86 -4.59L-1.93 -4.57L-1.53 -6.52L1.53 -6.52L1.93 -4.57L1.86 -4.60L3.53 -5.69L5.69 -3.53L4.59 -1.86L4.57 -1.93ZM2.41 0A2.41 2.41 0 1 0 -2.41 0A2.41 2.41 0 1 0 2.41 0Z" fill="#b7a6cf" fill-rule="evenodd"/></svg>
<div class="t" style="left:191.70px;top:842.82px;font-size:13.5px;line-height:19px;color:#444746;letter-spacing:0.95px;-webkit-text-stroke:0.28px #444746;">Настройки</div>
<svg class="a" style="left:278.1px;top:849.5px;" width="7.8" height="4" viewBox="0 0 7.8 4"><path d="M0 0H7.8L3.9 4Z" fill="#444746"/></svg>
<div class="a" style="left:296.7px;top:832.5px;width:110px;height:34.5px;background:#e1e9f7;"></div>
<svg class="a" style="left:310.5px;top:845px;" width="15" height="15" viewBox="0 0 15 15"><g transform="rotate(45 7.500 7.500)"><path d="M4.300 7.500L2 11v2.200l2.600-1.400zM10.700 7.500l2.300 3.500v2.200l-2.600-1.400z" fill="#e8467c"/><path d="M7.500 -1.800c2.600 2 3.400 4.800 3.400 7.300v5.500H4.100V5.500c0-2.500.800-5.300 3.400-7.300z" fill="#ededf4"/><path d="M7.500 -1.800c1.300 1 2.200 2.300 2.700 3.600H4.800c.500-1.300 1.400-2.600 2.700-3.600z" fill="#e5394f"/><circle cx="7.500" cy="5" r="1.500" fill="#4b9be8"/><path d="M5.500 11h4v1.300h-4z" fill="#c9c9d6"/><path d="M5.800 12.300h3.400c0 1.800-.900 3.200-1.700 4.200-.800-1-1.700-2.400-1.700-4.200z" fill="#f59a23"/></g></svg>
<div class="t" style="left:331.70px;top:842.82px;font-size:13.5px;line-height:19px;color:#0b57d0;font-weight:bold;letter-spacing:0.7px;">Посты</div>
<svg class="a" style="left:387.40000000000003px;top:849.5px;" width="7.8" height="4" viewBox="0 0 7.8 4"><path d="M0 0H7.8L3.9 4Z" fill="#0b57d0"/></svg>
<div class="t" style="left:418.00px;top:842.82px;font-size:13.5px;line-height:19px;color:#444746;letter-spacing:0.85px;-webkit-text-stroke:0.3px #444746;">Лист1</div>
<svg class="a" style="left:468.90000000000003px;top:849.5px;" width="7.8" height="4" viewBox="0 0 7.8 4"><path d="M0 0H7.8L3.9 4Z" fill="#444746"/></svg>
<div class="t" style="left:1262.00px;top:842.80px;font-size:13px;line-height:18px;color:#1e3a34;letter-spacing:0.62px;-webkit-text-stroke:0.4px #1e3a34;">Количество: 3</div>
<svg class="a" style="left:1388px;top:847.5px;" width="7" height="10.5" viewBox="0 0 7 10.500"><path d="M6 .800L1.500 5.250 6 9.700" fill="none" stroke="#444746" stroke-width="1.700"/></svg>
<div class="a" style="left:26.8px;top:22px;width:1391.2px;height:845px;background:rgba(0,0,0,0.32);"></div>
<div class="a" style="left:23px;top:22px;width:3.8px;height:845px;background:#1d1f27;"></div>
<div class="a" style="left:23.6px;top:830px;width:3.2px;height:18px;background:rgba(110,85,30,0.450);"></div>
<div class="a" style="left:24px;top:835.2px;width:2.8px;height:7.4px;background:#e6ae2e;border-radius:3.500px 0 0 3.500px"></div>
<div class="a" style="left:514px;top:48px;width:417px;height:50px;background:#303030;border-radius:4px"></div>
<div class="t" style="left:529.00px;top:63.15px;font-size:14px;line-height:20px;color:#ffffff;letter-spacing:-0.05px;-webkit-text-stroke:0.25px #fff;">Выполняется скрипт ""</div>
<div class="t" style="left:772.50px;top:63.15px;font-size:14px;line-height:20px;color:#95b8f3;-webkit-text-stroke:0.25px #95b8f3;">Отмена</div>
<div class="t" style="left:855.50px;top:63.15px;font-size:14px;line-height:20px;color:#95b8f3;letter-spacing:0.25px;-webkit-text-stroke:0.25px #95b8f3;">Закрыть</div>
<div class="a" style="left:554.5px;top:350px;width:335.5px;height:185px;background:#ffffff;border-radius:28px"></div>
<svg class="a" style="left:583px;top:377px;" width="29" height="29.5" viewBox="0 0 29 29.500"><path d="M1 28.800L5.800 10.500 18.500 23.200z" fill="#f2a53a"/><path d="M2.200 24.300l3.800 3.200-5 1.300zM3.600 19l7.400 6.800-3 .8-5.100-4.600zM5 13.700l10.700 10.500-3 .8-8.400-8.300z" fill="#3f6fe0"/><ellipse cx="12.200" cy="16.800" rx="9" ry="3.300" transform="rotate(45 12.200 16.800)" fill="#d98f1c"/><path d="M8.500 14.500c1.500-3 .500-5.500-1-8" fill="none" stroke="#f2418f" stroke-width="2.600" stroke-linecap="round"/><path d="M12.500 17c2.500-4.500 8-5.500 14.500-3" fill="none" stroke="#3f9af0" stroke-width="2.600" stroke-linecap="round"/><path d="M19 9.500c2-2 5-2.500 8.500-1.500" fill="none" stroke="#f2418f" stroke-width="2.300" stroke-linecap="round"/><path d="M13.800 8c-1.500-1.500-.500-4 1.800-3.300l.700-3.500M15.600 4.700c1.200.300 1.500 1.700.700 2.600" fill="none" stroke="#2f8be8" stroke-width="1.800" stroke-linecap="round"/><circle cx="8" cy="1.800" r="1.300" fill="#f2b53a"/><circle cx="3" cy="6.500" r="1.200" fill="#f2418f"/><circle cx="22.500" cy="5.500" r="1.200" fill="#f2418f"/><circle cx="23.500" cy="22" r="1.300" fill="#f2a53a"/><circle cx="13.500" cy="13" r="1.100" fill="#2f8be8"/></svg>
<div class="t" style="left:624.00px;top:371.28px;font-size:29.5px;line-height:41px;color:#1f1f1f;letter-spacing:0.2px;">Готово!</div>
<div class="t" style="left:578.00px;top:428.76px;font-size:16px;line-height:22px;color:#4a4d4c;letter-spacing:0.55px;">Все выделенные посты обработаны.</div>
<div class="a" style="left:800.200px;top:469.800px;width:72px;height:48px;box-sizing:border-box;border:3px solid #0b5a8c;border-radius:24px;background:#fff"></div>
<div class="a" style="left:805px;top:474px;width:62.5px;height:39px;background:#e8f0fe;border-radius:19.500px"></div>
<div class="t" style="left:824.50px;top:481.78px;font-size:16.5px;line-height:23px;color:#0b57d0;letter-spacing:0.3px;-webkit-text-stroke:0.45px #0b57d0;">OK</div>
</div></div>
</body></html>
